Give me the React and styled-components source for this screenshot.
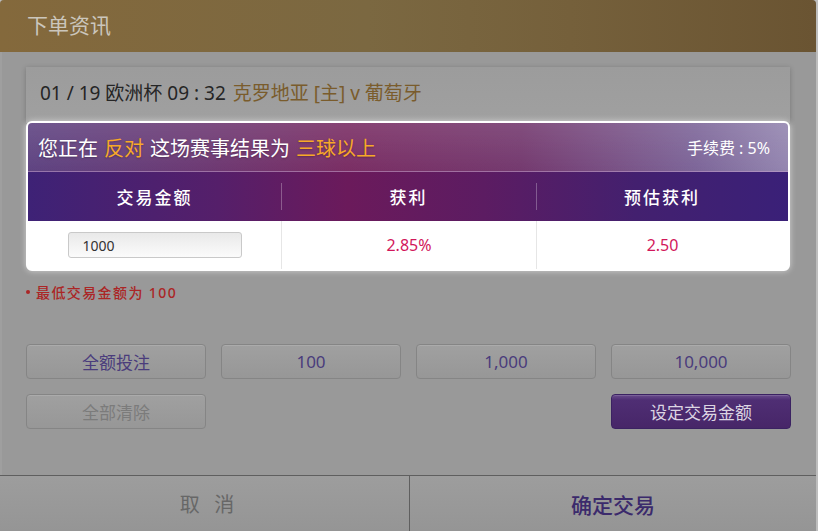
import React from 'react';
import styled, { createGlobalStyle } from 'styled-components';

const GlobalStyle = createGlobalStyle`
  html, body {
    margin: 0;
    padding: 0;
    background: #bdbdbd;
  }
  body {
    font-family: "Noto Sans", "Noto Sans CJK SC", sans-serif;
  }
`;

const Page = styled.div`
  width: 818px;
  height: 531px;
  display: flex;
`;

const Modal = styled.div`
  width: 816px;
  height: 531px;
  background: #999999;
  border-radius: 4px 4px 0 0;
  overflow: hidden;
  display: flex;
  flex-direction: column;
  box-shadow: inset 2px 0 0 rgba(255, 255, 255, 0.06);
`;

const Header = styled.div`
  height: 52px;
  flex: none;
  display: flex;
  align-items: center;
  padding: 0 0 4px 27px;
  box-sizing: border-box;
  background: linear-gradient(90deg, #84693c 0%, #7b6841 45%, #75603b 70%, #6a5432 100%);
  color: #cbc6bc;
  font-size: 21px;
  font-family: "Noto Sans CJK SC", sans-serif;
`;

const Body = styled.div`
  flex: 1;
  padding: 15px 26px 0 26px;
  display: flex;
  flex-direction: column;
`;

const MatchBar = styled.div`
  height: 56px;
  box-sizing: border-box;
  display: flex;
  align-items: center;
  padding: 0 0 7px 14px;
  background: linear-gradient(#9c9c9c, #a0a0a0);
  box-shadow: 0 1px 5px rgba(0, 0, 0, 0.22);
  font-size: 19px;
  color: #252525;
  gap: 7px;
`;

const Brown = styled.span`
  color: #7a5c2c;
`;

const Ticket = styled.div`
  border: 2px solid #ffffff;
  border-radius: 6px;
  overflow: hidden;
  background: #fff;
  box-shadow: 0 0 6px rgba(255, 255, 255, 0.55);
  position: relative;
  margin-top: -2px;
`;

const TitleRow = styled.div`
  height: 48px;
  display: flex;
  align-items: center;
  justify-content: space-between;
  padding: 0 18px 0 10px;
  color: #ffffff;
  background:
    linear-gradient(180deg, rgba(255, 255, 255, 0.1), rgba(255, 255, 255, 0)),
    linear-gradient(90deg, #5f4482 0%, #6c3a74 22%, #7a2e64 42%, #743a6f 65%, #7d6699 88%, #9486b0 100%);
  border-bottom: 1px solid rgba(190, 150, 200, 0.5);
`;

const TitleText = styled.div`
  font-size: 20px;
  display: flex;
  gap: 6px;
  text-shadow: 0 1px 2px rgba(0, 0, 0, 0.25);
`;

const Orange = styled.span`
  color: #f7a928;
`;

const Fee = styled.div`
  font-size: 16px;
`;

const Grid = styled.div`
  display: grid;
  grid-template-columns: 253px 255px 1fr;
`;

const HeadRow = styled(Grid)`
  height: 49px;
  background: linear-gradient(90deg, #3e2276 0%, #551f6a 25%, #6b1a5b 42%, #5c1c62 60%, #43206f 80%, #3a2078 100%);
`;

const HeadCell = styled.div`
  display: flex;
  align-items: center;
  justify-content: center;
  color: #ffffff;
  font-size: 17px;
  font-weight: 500;
  letter-spacing: 2px;
  position: relative;
  &:not(:first-child)::before {
    content: '';
    position: absolute;
    left: 0;
    top: 11px;
    bottom: 11px;
    width: 1px;
    background: rgba(255, 255, 255, 0.28);
  }
`;

const DataRow = styled(Grid)`
  height: 48px;
  background: #ffffff;
`;

const DataCell = styled.div`
  display: flex;
  align-items: center;
  justify-content: center;
  color: #d2175b;
  font-size: 16px;
  border-left: ${({ first }) => (first ? 'none' : '1px solid #e6e6e6')};
`;

const AmountInput = styled.div`
  width: 158px;
  height: 24px;
  display: flex;
  align-items: center;
  padding-left: 14px;
  border: 1px solid #c9c9c9;
  border-radius: 3px;
  background: linear-gradient(#e9e9e9, #fbfbfb);
  color: #333333;
  font-size: 14px;
`;

const Note = styled.div`
  margin-top: 12px;
  font-size: 14px;
  letter-spacing: 1.4px;
  font-weight: 500;
  color: #ab2626;
  display: flex;
  align-items: center;
  gap: 6px;
  height: 18px;
`;

const Dot = styled.span`
  width: 4px;
  height: 4px;
  border-radius: 50%;
  background: #ab2626;
  display: inline-block;
`;

const Buttons = styled.div`
  margin-top: 43px;
  display: grid;
  grid-template-columns: repeat(4, 180px);
  grid-auto-rows: 35px;
  column-gap: 15px;
  row-gap: 15px;
`;

const Btn = styled.div`
  display: flex;
  align-items: center;
  justify-content: center;
  border-radius: 4px;
  font-size: 17px;
  box-sizing: border-box;
  grid-column: ${({ col }) => col || 'auto'};
  border: 1px solid ${({ primary }) => (primary ? '#3b2262' : '#858585')};
  color: ${({ primary, muted }) => (primary ? '#dcd5e2' : muted ? '#7b7b7b' : '#4a3c7c')};
  background: ${({ primary }) =>
    primary
      ? 'linear-gradient(#6a4d8c 0%, #4f2e74 15%, #472668 100%)'
      : 'linear-gradient(#a0a0a0, #979797)'};
  box-shadow: inset 0 1px 0 rgba(255, 255, 255, 0.12);
`;

const Footer = styled.div`
  height: 55px;
  flex: none;
  display: grid;
  grid-template-columns: 409px 1fr;
  border-top: 1px solid #5f5f5f;
  background: linear-gradient(#9d9d9d, #959595);
`;

const FootBtn = styled.div`
  display: flex;
  align-items: center;
  justify-content: center;
  font-size: ${({ primary }) => (primary ? '21px' : '20px')};
  font-family: "Noto Sans CJK SC", sans-serif;
  letter-spacing: ${({ spaced }) => (spaced ? '5px' : '0')};
  padding-left: ${({ spaced }) => (spaced ? '10px' : '0')};
  color: ${({ primary }) => (primary ? '#3b2a6c' : '#676767')};
  font-weight: ${({ primary }) => (primary ? 500 : 400)};
  border-left: ${({ primary }) => (primary ? '1px solid #5f5f5f' : 'none')};
`;

export default function App() {
  return (
    <Page>
      <GlobalStyle />
      <Modal>
        <Header>下单资讯</Header>
        <Body>
          <MatchBar>
            <span>01 / 19 欧洲杯 09 : 32</span>
            <Brown>克罗地亚 [主] v 葡萄牙</Brown>
          </MatchBar>
          <Ticket>
            <TitleRow>
              <TitleText>
                <span>您正在</span>
                <Orange>反对</Orange>
                <span>这场赛事结果为</span>
                <Orange>三球以上</Orange>
              </TitleText>
              <Fee>手续费 : 5%</Fee>
            </TitleRow>
            <HeadRow>
              <HeadCell>交易金额</HeadCell>
              <HeadCell>获利</HeadCell>
              <HeadCell>预估获利</HeadCell>
            </HeadRow>
            <DataRow>
              <DataCell first>
                <AmountInput>1000</AmountInput>
              </DataCell>
              <DataCell>2.85%</DataCell>
              <DataCell>2.50</DataCell>
            </DataRow>
          </Ticket>
          <Note>
            <Dot />
            最低交易金额为 100
          </Note>
          <Buttons>
            <Btn>全额投注</Btn>
            <Btn>100</Btn>
            <Btn>1,000</Btn>
            <Btn>10,000</Btn>
            <Btn muted>全部清除</Btn>
            <Btn primary col="4">设定交易金额</Btn>
          </Buttons>
        </Body>
        <Footer>
          <FootBtn spaced>取 消</FootBtn>
          <FootBtn primary>确定交易</FootBtn>
        </Footer>
      </Modal>
    </Page>
  );
}
